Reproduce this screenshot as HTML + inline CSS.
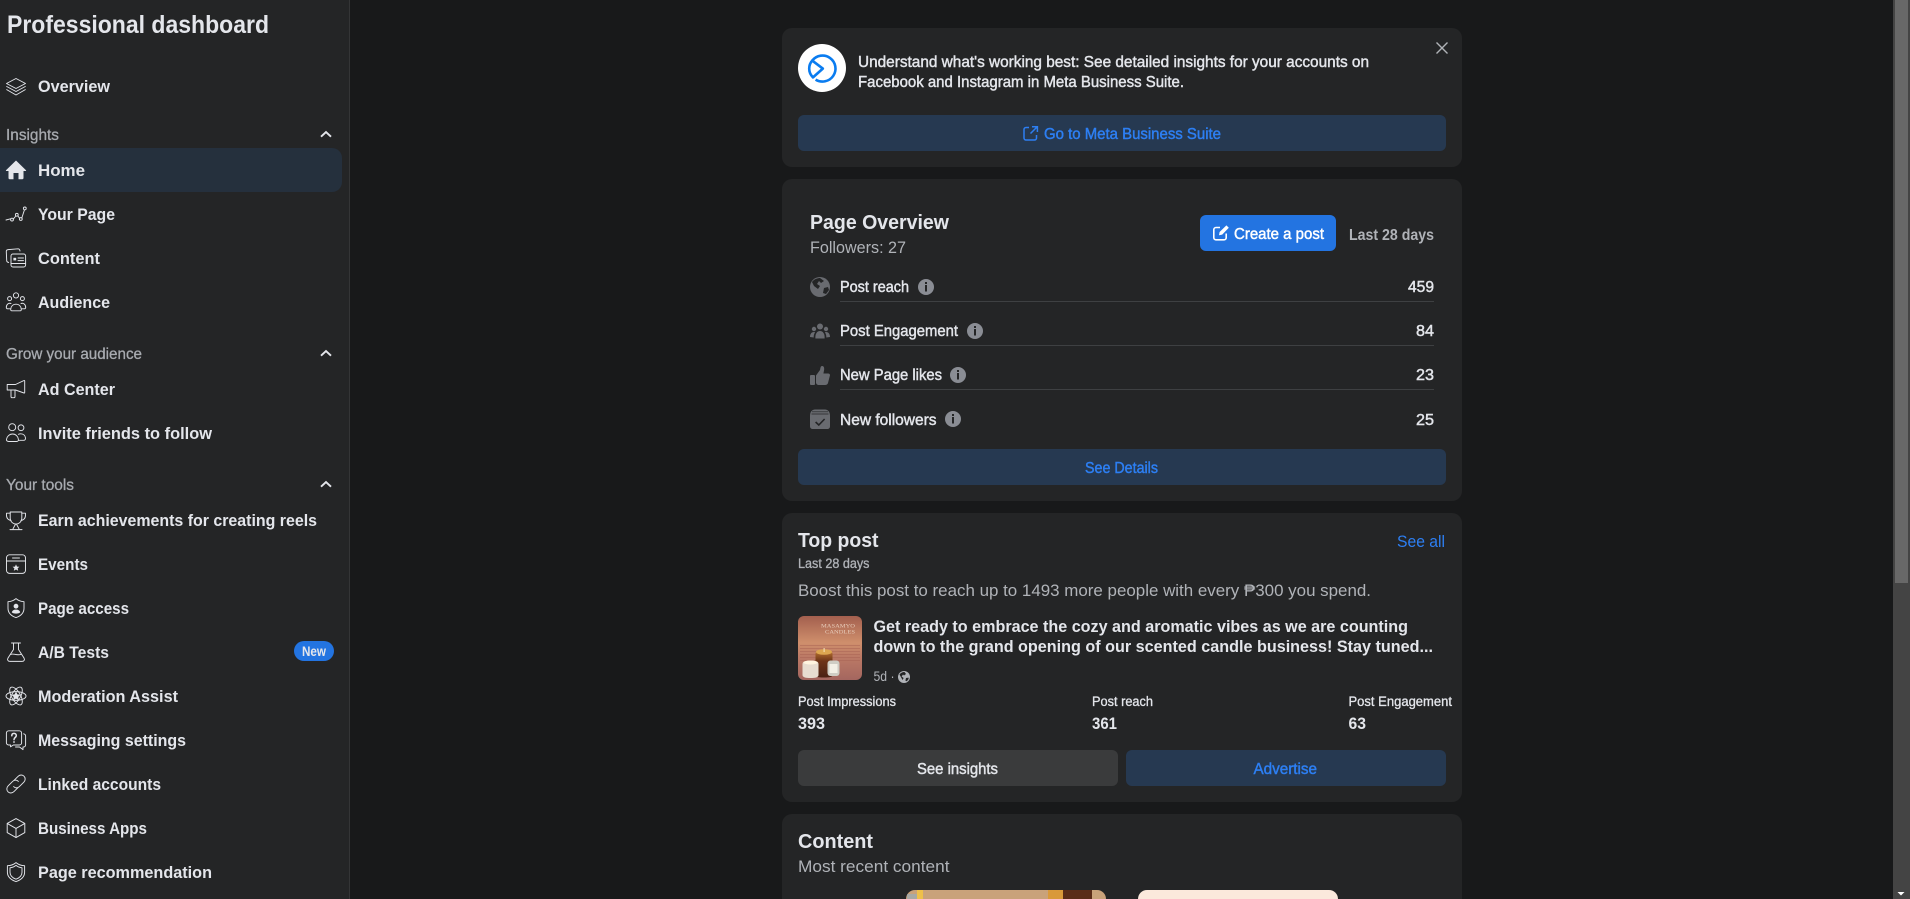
<!DOCTYPE html>
<html lang="en">
<head>
<meta charset="utf-8">
<title>Professional dashboard</title>
<style>
html,body{margin:0;padding:0;width:1910px;height:899px;overflow:hidden;background:#18191a}
svg{display:block;font-family:"Liberation Sans",sans-serif}
.n{font-size:17px;font-weight:700;fill:#e4e6eb}
.h{font-size:16px;font-weight:400;fill:#a8abb0;stroke:#a8abb0;stroke-width:.3}
.m{font-size:16px;font-weight:400;fill:#e4e6eb;stroke:#e4e6eb;stroke-width:.45}
.t{font-size:20px;font-weight:700;fill:#e4e6eb}
.s{font-size:17px;font-weight:400;fill:#b0b3b8}
.l{font-size:16px;font-weight:400;fill:#2d7ff3;stroke:#2d7ff3;stroke-width:.45}
.c{font-size:13.5px;font-weight:400;fill:#e4e6eb;stroke:#e4e6eb;stroke-width:.3}
.i{fill:none;stroke:#e4e6eb;stroke-width:.95;stroke-linecap:round;stroke-linejoin:round}
.g{fill:#696b70}
.inf{fill:#8a8d94}
</style>
</head>
<body>
<svg width="1910" height="899" viewBox="0 0 1910 899" xmlns="http://www.w3.org/2000/svg">
<defs>
<linearGradient id="pg" x1="0" y1="0" x2="0" y2="1">
<stop offset="0" stop-color="#a35f4e"/><stop offset=".42" stop-color="#cf8f6c"/><stop offset=".62" stop-color="#bd7b66"/><stop offset="1" stop-color="#a4665f"/>
</linearGradient>
<linearGradient id="cd" x1="0" y1="0" x2="0" y2="1"><stop offset="0" stop-color="#c07a33"/><stop offset=".4" stop-color="#6e3418"/><stop offset="1" stop-color="#4a2114"/></linearGradient>
<clipPath id="pc"><rect x="798" y="616" width="64" height="64" rx="6"/></clipPath>
<clipPath id="v1"><rect x="906" y="890" width="200" height="20" rx="9"/></clipPath>
<g id="info"><circle r="8" class="inf"/><rect x="-1" y="-2" width="2" height="6.5" fill="#242526"/><rect x="-1" y="-5" width="2" height="2" fill="#242526"/></g>
</defs>

<rect width="1910" height="899" fill="#18191a"/>

<!-- Sidebar -->
<rect width="349" height="899" fill="#242526"/>
<rect x="349" width="1" height="899" fill="#343536"/>
<text x="7" y="33" font-size="25" font-weight="700" fill="#e4e6eb" textLength="262" lengthAdjust="spacingAndGlyphs">Professional dashboard</text>

<rect x="-12" y="148" width="354" height="44" rx="10" fill="#25303d"/>

<text class="n" x="38" y="92" textLength="72" lengthAdjust="spacingAndGlyphs">Overview</text>
<text class="h" x="6" y="140" textLength="53" lengthAdjust="spacingAndGlyphs">Insights</text>
<text class="n" x="38" y="176" textLength="47" lengthAdjust="spacingAndGlyphs">Home</text>
<text class="n" x="38" y="220" textLength="77" lengthAdjust="spacingAndGlyphs">Your Page</text>
<text class="n" x="38" y="264" textLength="62" lengthAdjust="spacingAndGlyphs">Content</text>
<text class="n" x="38" y="308" textLength="72" lengthAdjust="spacingAndGlyphs">Audience</text>
<text class="h" x="6" y="359" textLength="136" lengthAdjust="spacingAndGlyphs">Grow your audience</text>
<text class="n" x="38" y="395" textLength="77" lengthAdjust="spacingAndGlyphs">Ad Center</text>
<text class="n" x="38" y="439" textLength="174" lengthAdjust="spacingAndGlyphs">Invite friends to follow</text>
<text class="h" x="6" y="490" textLength="68" lengthAdjust="spacingAndGlyphs">Your tools</text>
<text class="n" x="38" y="526" textLength="279" lengthAdjust="spacingAndGlyphs">Earn achievements for creating reels</text>
<text class="n" x="38" y="570" textLength="50" lengthAdjust="spacingAndGlyphs">Events</text>
<text class="n" x="38" y="614" textLength="91" lengthAdjust="spacingAndGlyphs">Page access</text>
<text class="n" x="38" y="658" textLength="71" lengthAdjust="spacingAndGlyphs">A/B Tests</text>
<text class="n" x="38" y="702" textLength="140" lengthAdjust="spacingAndGlyphs">Moderation Assist</text>
<text class="n" x="38" y="746" textLength="148" lengthAdjust="spacingAndGlyphs">Messaging settings</text>
<text class="n" x="38" y="790" textLength="123" lengthAdjust="spacingAndGlyphs">Linked accounts</text>
<text class="n" x="38" y="834" textLength="109" lengthAdjust="spacingAndGlyphs">Business Apps</text>
<text class="n" x="38" y="878" textLength="174" lengthAdjust="spacingAndGlyphs">Page recommendation</text>

<rect x="294" y="641" width="40" height="20" rx="10" fill="#2374e1"/>
<text x="302" y="656" font-size="14" font-weight="700" fill="#e4e6eb" textLength="24" lengthAdjust="spacingAndGlyphs">New</text>

<path d="M321 136.7L326 132L331 136.7M321 355.7L326 351L331 355.7M321 486.7L326 482L331 486.7" fill="none" stroke="#e4e6eb" stroke-width="1.9"/>

<!-- Overview -->
<g class="i" transform="translate(6,77)"><path d="M10 1.5L19.5 6.5L10 11.5L.5 6.5Z"/><path d="M.7 9.5L10 14.5L19.3 9.5"/><path d="M.7 12.6L10 18L19.3 12.6"/></g>
<!-- Home -->
<path transform="translate(6,160)" fill="#e4e6eb" d="M10 .5L20 10.2C20.3 10.7 20 11 19.5 11H17.5V18C17.5 18.8 17 19.2 16.3 19.2H12.5V13H7.5V19.2H3.7C3 19.2 2.5 18.8 2.5 18V11H.5C0 11 -.3 10.7 0 10.2Z"/>
<!-- Your Page -->
<g class="i" transform="translate(6,204)"><path d="M0 16L4.6 14.8M7.2 15.2L9.8 12M12 12.2L13.6 14.2M15.8 14L18.4 6"/><circle cx="6" cy="15.6" r="1.4"/><circle cx="10.8" cy="10.8" r="1.4"/><circle cx="14.8" cy="15" r="1.4"/><circle cx="18.8" cy="4.4" r="1.4"/></g>
<!-- Content -->
<g class="i" transform="translate(6,248)"><rect x="5" y="6" width="14.6" height="13" rx="2"/><path d="M5 15.5H19.6M12 10H17.5M12 12.6H17.5"/><rect x="7.4" y="9.8" width="2.8" height="2.6" fill="#e4e6eb" stroke="none"/><path d="M2.6 14.5C1.4 14.2.8 13.6.7 12.8L.3 3.4C.3 2.4 1 1.7 2.2 1.6L12 .8C13.2.8 13.8 1.6 14 3"/></g>
<!-- Audience -->
<g class="i" transform="translate(6,292)"><circle cx="10" cy="3.4" r="2.6"/><circle cx="3.6" cy="6.6" r="2"/><circle cx="16.4" cy="6.6" r="2"/><path d="M5.8 18.8H14.2C15 18.8 15.4 18.2 15.3 17.4C15 14.2 13 12.2 10 12.2C7 12.2 5 14.2 4.7 17.4C4.6 18.2 5 18.8 5.8 18.8Z"/><path d="M5 11.5C2.6 10.6.4 12.4.3 15.2C.3 16.2.8 16.8 1.8 16.8H4.7M15 11.5C17.4 10.6 19.6 12.4 19.7 15.2C19.7 16.2 19.2 16.8 18.2 16.8H15.3"/></g>
<!-- Ad center -->
<g class="i" transform="translate(6,379)"><path d="M1.2 5.5H9.5L18 1.5C18.4 1.3 18.7 1.5 18.7 2V13.5C18.7 14 18.4 14.2 18 14L9.5 11H1.2Z"/><path d="M5 11V17.5C5 18.4 5.4 18.7 6 18.7H8C8.7 18.7 9 18.3 9 17.5V11"/></g>
<!-- Invite -->
<g class="i" transform="translate(6,423)"><circle cx="6.2" cy="4.2" r="3.5"/><circle cx="15" cy="4.8" r="2.9"/><path d="M2.8 18.5H10.5C12 18.5 12.6 17.6 12.4 16.3C12 13.4 9.8 11 6.6 11C3.4 11 1 13.4.5 16.3C.3 17.6 1.2 18.5 2.8 18.5Z"/><path d="M12.5 11.3C13 11 13.8 10.8 14.8 10.8C17.6 10.8 19.2 12.8 19.5 15C19.7 16.4 18.9 17.3 17.6 17.3H12.5"/></g>
<!-- Trophy -->
<g class="i" transform="translate(6,511)"><path d="M4.2 1H15.8V7C15.8 10.5 13.2 13 10 13C6.8 13 4.2 10.5 4.2 7Z"/><path d="M4.2 2.2H.5V4.2C.5 7.4 2.6 9.2 5 9.4M15.8 2.2H19.5V4.2C19.5 7.4 17.4 9.2 15 9.4"/><path d="M9.6 13L7 17.8M10.4 13L13 17.8M4 18.6H16"/></g>
<!-- Events -->
<g class="i" transform="translate(6,554)"><rect x=".5" y=".8" width="19" height="18.6" rx="3"/><path d="M.5 7H19.5M6.5 4H13.5"/><path fill="#e4e6eb" stroke="none" d="M10 10.4L11 12.6L13.4 12.8L11.6 14.4L12.2 16.8L10 15.5L7.8 16.8L8.4 14.4L6.6 12.8L9 12.6Z"/></g>
<!-- Page access -->
<g class="i" transform="translate(6,598)"><path d="M10 .6C12.4 2.6 15.8 3.6 18 3.7V10.2C18 14.8 15 17.8 10 19.6C5 17.8 2 14.8 2 10.2V3.7C4.2 3.6 7.6 2.6 10 .6Z"/><circle cx="10" cy="8.2" r="2.4" fill="#e4e6eb" stroke="none"/><path fill="#e4e6eb" stroke="none" d="M5.8 14.4C6.2 12.6 7.6 11.6 10 11.6C12.4 11.6 13.8 12.6 14.2 14.4C13 15.4 11.6 15.6 10 15.6C8.4 15.6 7 15.4 5.8 14.4Z"/></g>
<!-- Flask -->
<g class="i" transform="translate(6,642)"><path d="M5.5 1H14.5M7.5 1V7.5L2 16C1 17.8 2 19.4 4 19.4H16C18 19.4 19 17.8 18 16L12.5 7.5V1"/><path d="M4.8 12.4C7.5 11 10 13.8 15 12.4"/></g>
<!-- Moderation -->
<g class="i" stroke-width=".8" transform="translate(6,686)"><ellipse cx="10" cy="10" rx="10" ry="4.4"/><ellipse cx="10" cy="10" rx="10" ry="4.4" transform="rotate(60 10 10)"/><ellipse cx="10" cy="10" rx="10" ry="4.4" transform="rotate(120 10 10)"/><path fill="#e4e6eb" stroke="none" d="M10 5.5L11.4 8.4L14.6 8.8L12.3 11L12.9 14.2L10 12.6L7.1 14.2L7.7 11L5.4 8.8L8.6 8.4Z"/></g>
<!-- Messaging -->
<g class="i" transform="translate(6,730)"><path d="M2.8.8H13.2C14.6.8 15.6 1.8 15.6 3.2V12.6C15.6 14 14.6 15 13.2 15H7.4L4.5 16.8V15H2.8C1.4 15 .4 14 .4 12.6V3.2C.4 1.8 1.4.8 2.8.8Z"/><path d="M17.6 3.8C18.8 4 19.6 5 19.6 6.2V14.8C19.6 16 18.8 17 17.6 17H17V19.6L13.5 17H9.5"/><path stroke-width="1.5" d="M5.8 5.8C5.8 4.2 6.8 3.4 8 3.4C9.3 3.4 10.3 4.2 10.3 5.6C10.3 7.4 8 7.4 8 9.6"/><circle cx="8" cy="12" r=".9" fill="#e4e6eb" stroke="none"/></g>
<!-- Link -->
<g class="i" transform="translate(6,774)"><path d="M8.2 6.2L12 2.4C13.8.6 16.4.6 18 2.2C19.6 3.8 19.6 6.4 17.8 8.2L13.4 12.6C11.6 14.4 9.2 14.2 7.6 12.6"/><path d="M11.8 13.8L8 17.6C6.2 19.4 3.6 19.4 2 17.8C.4 16.2.4 13.6 2.2 11.8L6.6 7.4C8.4 5.6 10.8 5.8 12.4 7.4"/></g>
<!-- Cube -->
<g class="i" transform="translate(6,818)"><path d="M10 .6L18.8 5.4V14.6L10 19.6L1.2 14.6V5.4Z"/><path d="M1.4 5.6L10 10.4L18.6 5.6M10 10.4V19.4"/></g>
<!-- Shield -->
<g class="i" transform="translate(6,862)"><path d="M10 .6C12.4 2.6 15.8 3.6 18.6 3.7V10.2C18.6 14.8 15 17.8 10 19.6C5 17.8 1.4 14.8 1.4 10.2V3.7C4.2 3.6 7.6 2.6 10 .6Z"/><path d="M10 3.4C11.8 4.8 14 5.6 16 5.8V10.2C16 13.6 13.6 15.8 10 17.2C6.4 15.8 4 13.6 4 10.2V5.8C6 5.6 8.2 4.8 10 3.4Z"/></g>

<!-- Card 1: Meta Business Suite -->
<rect x="782" y="28" width="680" height="139" rx="10" fill="#242526"/>
<circle cx="822" cy="68" r="24" fill="#fff"/>
<g fill="none" stroke="#0a7cf0" stroke-width="2.6">
<path d="M812.2 60.6A13 13 0 1 1 815.6 79.6"/>
<path d="M812.2 60.6L822.8 68.6L813 77.4C810.6 75 809.2 72 809.2 68.6C809.2 65.6 810.2 62.8 812.2 60.6Z" stroke-linejoin="round"/>
</g>
<text class="m" x="858" y="67" textLength="511" lengthAdjust="spacingAndGlyphs">Understand what's working best: See detailed insights for your accounts on</text>
<text class="m" x="858" y="87" textLength="326" lengthAdjust="spacingAndGlyphs">Facebook and Instagram in Meta Business Suite.</text>
<path d="M1436.5 42.5L1447.5 53.5M1447.5 42.5L1436.5 53.5" stroke="#b0b3b8" stroke-width="1.4" fill="none"/>
<rect x="798" y="115" width="648" height="36" rx="6" fill="#263951"/>
<g fill="none" stroke="#2d7ff3" stroke-width="1.5"><path d="M1029 127.5H1026A2 2 0 0 0 1024 129.5V138A2 2 0 0 0 1026 140H1034.5A2 2 0 0 0 1036.5 138V135"/><path d="M1032 126.7H1037.4V132M1037 127L1030.5 133.5"/></g>
<text class="l" x="1044" y="139" textLength="177" lengthAdjust="spacingAndGlyphs">Go to Meta Business Suite</text>

<!-- Card 2: Page overview -->
<rect x="782" y="179" width="680" height="322" rx="10" fill="#242526"/>
<text class="t" x="810" y="229" textLength="139" lengthAdjust="spacingAndGlyphs">Page Overview</text>
<text class="s" x="810" y="253" textLength="96" lengthAdjust="spacingAndGlyphs">Followers: 27</text>
<rect x="1200" y="215" width="136" height="36" rx="6" fill="#2374e1"/>
<g fill="none" stroke="#fff" stroke-width="1.6"><path d="M1220 227.5H1216A2.2 2.2 0 0 0 1213.8 229.7V237.6A2.2 2.2 0 0 0 1216 239.8H1224A2.2 2.2 0 0 0 1226.2 237.6V233.5"/></g>
<path d="M1219 235.3L1219.6 232L1226.4 225.4L1228.8 227.8L1222.2 234.6Z" fill="#fff"/>
<text class="m" x="1234" y="239" style="fill:#fff;stroke:#fff" textLength="90" lengthAdjust="spacingAndGlyphs">Create a post</text>
<text x="1349" y="240" font-size="16" font-weight="700" fill="#b0b3b8" textLength="85" lengthAdjust="spacingAndGlyphs">Last 28 days</text>

<!-- rows -->
<circle cx="820" cy="287" r="10" class="g"/>
<path d="M812 282C814 279 818 278 820 278L824 281L821 283L819 281L817 284L820 286L818 289L814 286ZM824 288L828 287L829 290L826 294L823 293Z" fill="#242526"/>
<text class="m" x="840" y="292" textLength="69" lengthAdjust="spacingAndGlyphs">Post reach</text>
<use href="#info" x="926" y="287"/>
<text class="m" x="1408" y="292" textLength="26" lengthAdjust="spacingAndGlyphs">459</text>
<rect x="840" y="301" width="594" height="1" fill="#3e4042"/>

<g class="g"><circle cx="820" cy="326.5" r="3"/><circle cx="814" cy="329" r="2.2"/><circle cx="826" cy="329" r="2.2"/><path d="M815.4 338.5C815 334 817 331 820 331C823 331 825 334 824.6 338.5Z"/><path d="M810 337C810 334 811.5 332 814 332C814.5 332 815 332 815 332.5C814 334 813.6 335.6 813.7 337.5ZM830 337C830 334 828.5 332 826 332C825.5 332 825 332 825 332.5C826 334 826.4 335.6 826.3 337.5Z"/></g>
<text class="m" x="840" y="336" textLength="118" lengthAdjust="spacingAndGlyphs">Post Engagement</text>
<use href="#info" x="975" y="331"/>
<text class="m" x="1416" y="336" textLength="18" lengthAdjust="spacingAndGlyphs">84</text>
<rect x="840" y="345" width="594" height="1" fill="#3e4042"/>

<g class="g"><rect x="810" y="375" width="5" height="10" rx="1"/><path d="M816 375.5L820 370C820.5 368 820.5 366 822 366C824 366 824.5 368 824 370.5L823.4 373.5H828C830 373.5 830.3 375 829.7 376.4L828 383C827.6 384.4 826.6 385 825 385H819C817.4 385 816 384 816 382.5Z"/></g>
<text class="m" x="840" y="380" textLength="102" lengthAdjust="spacingAndGlyphs">New Page likes</text>
<use href="#info" x="958" y="375"/>
<text class="m" x="1416" y="380" textLength="18" lengthAdjust="spacingAndGlyphs">23</text>
<rect x="840" y="389" width="594" height="1" fill="#3e4042"/>

<g class="g"><path d="M810 416C810 412 812 409.5 815 409.5H825C828 409.5 830 412 830 416V426C830 428 829 429 827 429H813C811 429 810 428 810 426Z"/></g>
<path d="M811.5 414H828.5M812 411.8H828" stroke="#242526" stroke-width=".7" fill="none"/>
<path d="M815.6 422L818.8 425L824.6 419" fill="none" stroke="#242526" stroke-width="1.6"/>
<text class="m" x="840" y="425" textLength="96.5" lengthAdjust="spacingAndGlyphs">New followers</text>
<use href="#info" x="953" y="419"/>
<text class="m" x="1416" y="425" textLength="18" lengthAdjust="spacingAndGlyphs">25</text>

<rect x="798" y="449" width="648" height="36" rx="6" fill="#263951"/>
<text class="l" x="1085" y="473" textLength="73" lengthAdjust="spacingAndGlyphs">See Details</text>

<!-- Card 3: Top post -->
<rect x="782" y="513" width="680" height="289" rx="10" fill="#242526"/>
<text class="t" x="798" y="547" textLength="80.5" lengthAdjust="spacingAndGlyphs">Top post</text>
<text x="1397" y="547" font-size="17" fill="#2d7ff3" textLength="48" lengthAdjust="spacingAndGlyphs">See all</text>
<text class="c" x="798" y="568" style="fill:#b0b3b8;stroke:#b0b3b8" textLength="71.5" lengthAdjust="spacingAndGlyphs">Last 28 days</text>
<text class="s" x="798" y="596" textLength="573" lengthAdjust="spacingAndGlyphs">Boost this post to reach up to 1493 more people with every ₱300 you spend.</text>

<g clip-path="url(#pc)">
<rect x="798" y="616" width="64" height="64" fill="url(#pg)"/>
<g fill="#a65f52" opacity=".45"><rect x="800" y="645" width="60" height="1"/><rect x="800" y="648" width="60" height="1"/><rect x="800" y="651" width="60" height="1"/><rect x="800" y="654" width="60" height="1"/><rect x="800" y="657" width="60" height="1"/><rect x="800" y="660" width="60" height="1"/></g>
<text x="821" y="627.5" font-family="Liberation Serif" font-size="5" fill="#e8cdbb" textLength="34" lengthAdjust="spacingAndGlyphs">MASAMYO</text>
<text x="825" y="633.5" font-family="Liberation Serif" font-size="5" fill="#e8cdbb" textLength="30" lengthAdjust="spacingAndGlyphs">CANDLES</text>
<path d="M815.5 654C815.5 651.5 819 650 824 650C829 650 832.5 651.5 832.5 654V675C832.5 677 830 677.5 824 677.5C818 677.5 815.5 677 815.5 675Z" fill="url(#cd)"/>
<ellipse cx="824" cy="652" rx="8" ry="2.8" fill="#dda650"/>
<rect x="823.6" y="648" width="1" height="4" fill="#f6e7c0"/>
<path d="M802.5 664C802.5 661.5 805.5 660.5 810.5 660.5C815.5 660.5 818.5 661.5 818.5 664V675C818.5 677.5 815 678 810.5 678C806 678 802.5 677.5 802.5 675Z" fill="#e7dcd0"/>
<ellipse cx="810.5" cy="662.5" rx="7" ry="2" fill="#fff4df"/>
<rect x="827.5" y="660.5" width="12" height="15.5" rx="3" fill="#cfcdc4"/>
<rect x="829.5" y="664" width="8" height="9" fill="#f3f0e6"/>
</g>

<text x="873.5" y="632" font-size="17" font-weight="700" fill="#e4e6eb" textLength="534.5" lengthAdjust="spacingAndGlyphs">Get ready to embrace the cozy and aromatic vibes as we are counting</text>
<text x="873.5" y="652" font-size="17" font-weight="700" fill="#e4e6eb" textLength="559.5" lengthAdjust="spacingAndGlyphs">down to the grand opening of our scented candle business! Stay tuned...</text>
<text x="873.5" y="681" font-size="14" fill="#b0b3b8" textLength="21" lengthAdjust="spacingAndGlyphs">5d ·</text>
<circle cx="904" cy="677" r="6" fill="#b0b3b8"/>
<path d="M899.5 674.5C901 672.5 903 672 904.5 672L906 674L904 675.5L903 674.5L901.6 676.5L903.6 678L902.6 680ZM906 678L908.6 677.6L908.6 679L906.8 681.2L905.4 680.6Z" fill="#242526"/>

<text class="c" x="798" y="706" textLength="98" lengthAdjust="spacingAndGlyphs">Post Impressions</text>
<text class="c" x="1092" y="706" textLength="61" lengthAdjust="spacingAndGlyphs">Post reach</text>
<text class="c" x="1348.5" y="706" textLength="103.5" lengthAdjust="spacingAndGlyphs">Post Engagement</text>
<text x="798" y="729" font-size="17" font-weight="700" fill="#e4e6eb" textLength="27" lengthAdjust="spacingAndGlyphs">393</text>
<text x="1092" y="729" font-size="17" font-weight="700" fill="#e4e6eb" textLength="25" lengthAdjust="spacingAndGlyphs">361</text>
<text x="1348.5" y="729" font-size="17" font-weight="700" fill="#e4e6eb" textLength="17.5" lengthAdjust="spacingAndGlyphs">63</text>

<rect x="798" y="750" width="320" height="36" rx="6" fill="#3a3b3c"/>
<text class="m" x="917" y="774" textLength="81" lengthAdjust="spacingAndGlyphs">See insights</text>
<rect x="1126" y="750" width="320" height="36" rx="6" fill="#263951"/>
<text class="l" x="1253.5" y="774" textLength="63.5" lengthAdjust="spacingAndGlyphs">Advertise</text>

<!-- Card 4: Content -->
<rect x="782" y="814" width="680" height="110" rx="10" fill="#242526"/>
<text class="t" x="798" y="848" textLength="75" lengthAdjust="spacingAndGlyphs">Content</text>
<text class="s" x="798" y="872" textLength="151.5" lengthAdjust="spacingAndGlyphs">Most recent content</text>
<g clip-path="url(#v1)">
<rect x="906" y="890" width="200" height="20" fill="#c9a27a"/>
<rect x="907" y="894" width="10" height="6" fill="#a8a9a4"/>
<rect x="917" y="890" width="6" height="9" fill="#eec04a"/>
<rect x="1048" y="890" width="15" height="9" fill="#d9993a"/>
<rect x="1063" y="890" width="29" height="9" fill="#5a2c18"/>
</g>
<rect x="1138" y="890" width="200" height="20" rx="9" fill="#fbe9dc"/>

<!-- Scrollbar -->
<rect x="1893" y="0" width="17" height="899" fill="#444"/>
<rect x="1895" y="0" width="13" height="583" fill="#686868"/>
<path d="M1897.5 892L1904.5 892L1901 895.5Z" fill="#fff"/>
</svg>
</body>
</html>
